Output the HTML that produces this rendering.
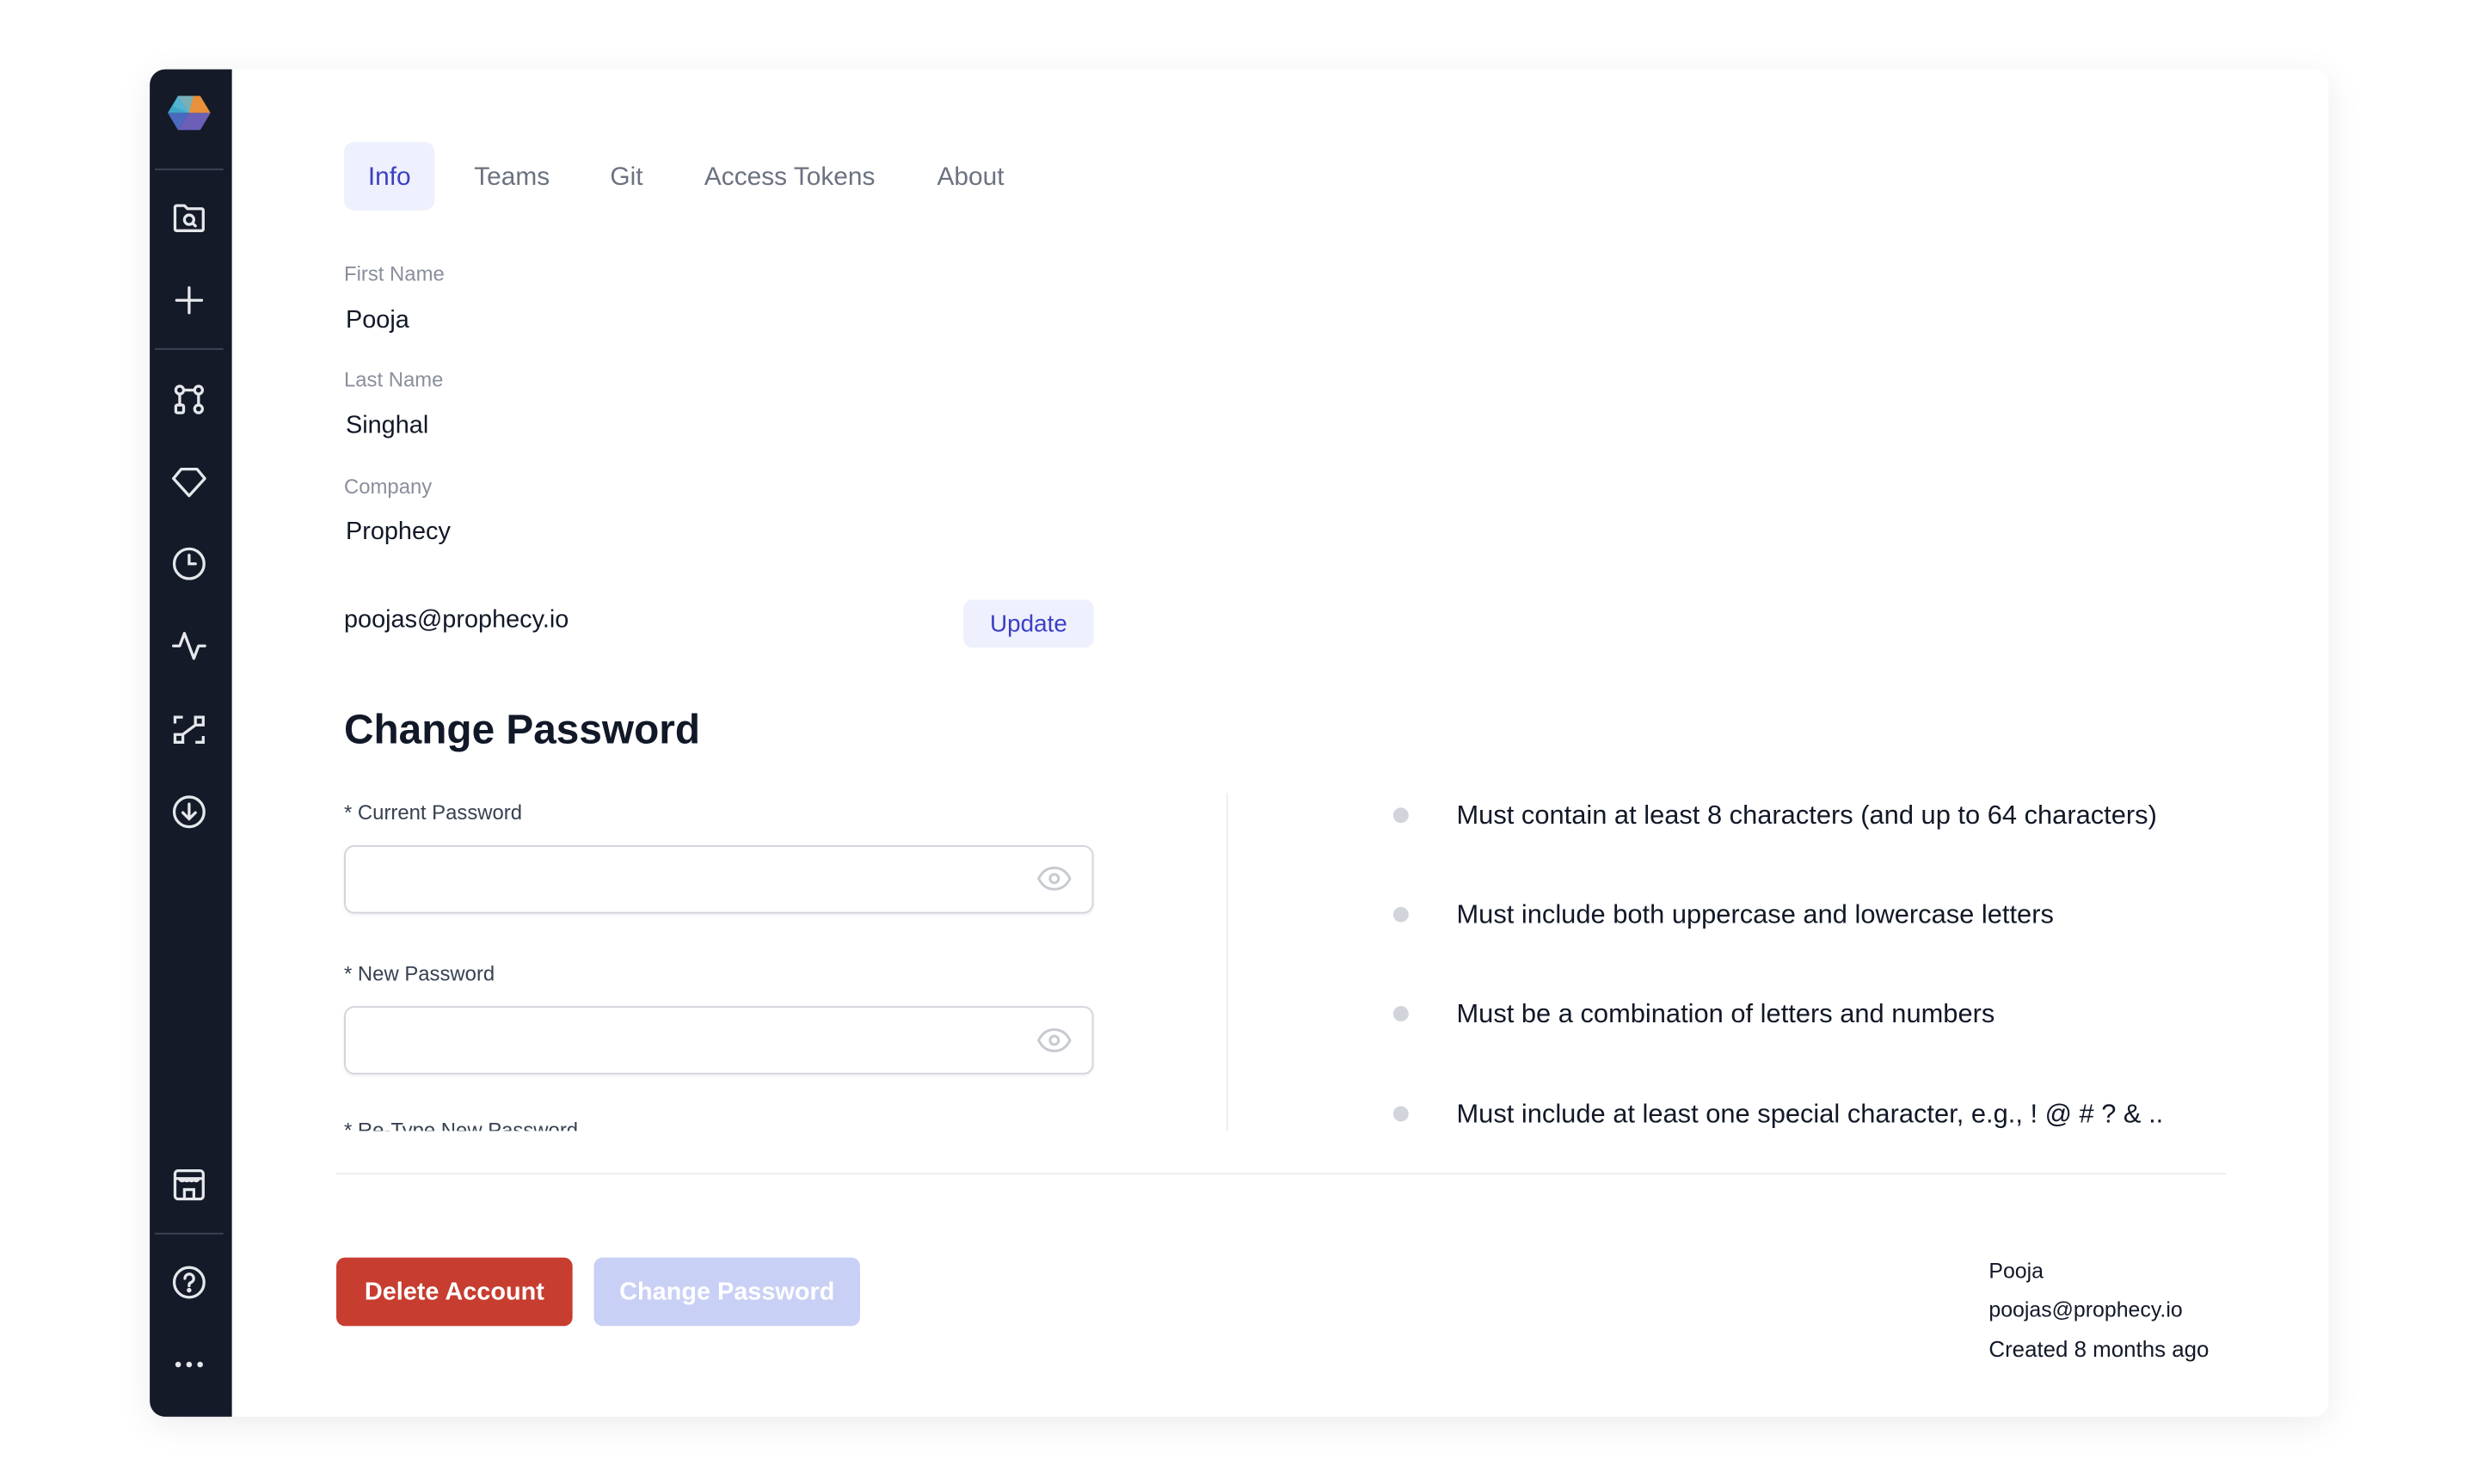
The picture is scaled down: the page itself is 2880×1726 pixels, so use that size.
<!DOCTYPE html>
<html><head><meta charset="utf-8"><style>
*{margin:0;padding:0;box-sizing:border-box}
html,body{width:2880px;height:1726px;background:#fff;overflow:hidden;font-family:"Liberation Sans",sans-serif}
#w{position:absolute;left:0;top:0;width:2880px;height:1726px;transform:scale(0.995);transform-origin:0 0}
.card{position:absolute;left:175px;top:81px;width:2546px;height:1575px;background:#fff;border-radius:18px;box-shadow:0 8px 40px rgba(0,0,0,0.08)}
.side{position:absolute;left:175px;top:81px;width:96px;height:1575px;background:#141a28;border-radius:18px 0 0 18px}
.sep{position:absolute;left:181px;width:80px;height:2px;background:#3a4150}
.ic{position:absolute;left:199px;width:44px;height:44px}
.t{position:absolute;white-space:nowrap}
.lab{font-size:24px;color:#8a8f9c}
.val{font-size:29px;color:#111827}
.tab{font-size:30px;color:#6b7280;top:190px}
.inp{position:absolute;left:402px;width:876px;height:80px;border:2px solid #d3d6dd;border-radius:12px;box-shadow:0 2px 3px rgba(0,0,0,0.05)}
.bul{position:absolute;left:1628px;width:18px;height:18px;border-radius:50%;background:#d1d5db}
.req{font-size:31px;color:#111827;left:1702px}
</style></head><body><div id="w">
<div class="card"></div>
<div class="side"></div>
<svg class="ic" style="top:110px;left:196px;width:50px" viewBox="0 0 50 44">
<polygon points="12,2 38,2 50,22 25,22" fill="#e9903a"/>
<polygon points="0,22 12,2 25,22" fill="#3fa7c8"/>
<polygon points="0,22 25,22 12,42" fill="#4a6ac0"/>
<polygon points="25,22 50,22 38,42 12,42" fill="#6b5fb8"/>
<polygon points="12,2 30,2 25,22 6,14" fill="#5bb8d6" opacity=".8"/>
</svg>
<div class="sep" style="top:197px"></div>
<svg class="ic" style="top:233px" viewBox="0 0 24 24" fill="none" stroke="#e5e7eb" stroke-width="1.8" stroke-linecap="round" stroke-linejoin="round"><path d="M3 7V5a1 1 0 0 1 1-1h5l2 2h9a1 1 0 0 1 1 1v12a1 1 0 0 1-1 1H4a1 1 0 0 1-1-1z"/><circle cx="12" cy="13" r="3"/><path d="M14.2 15.2 16 17"/></svg>
<svg class="ic" style="top:329px" viewBox="0 0 24 24" fill="none" stroke="#e5e7eb" stroke-width="1.8" stroke-linecap="round"><path d="M12 4v16M4 12h16"/></svg>
<div class="sep" style="top:407px"></div>
<svg class="ic" style="top:445px" viewBox="0 0 24 24" fill="none" stroke="#e5e7eb" stroke-width="1.8"><circle cx="6" cy="6" r="2.5"/><circle cx="18" cy="6" r="2.5"/><rect x="3.5" y="15.5" width="5" height="5" rx="1"/><circle cx="18" cy="18" r="2.5"/><path d="M8.5 6h7M6 8.5v7M18 8.5v7"/></svg>
<svg class="ic" style="top:541px" viewBox="0 0 24 24" fill="none" stroke="#e5e7eb" stroke-width="1.8" stroke-linejoin="round"><path d="M7 4h10l5 6-10 11L2 10z"/></svg>
<svg class="ic" style="top:637px" viewBox="0 0 24 24" fill="none" stroke="#e5e7eb" stroke-width="1.8" stroke-linecap="round"><circle cx="12" cy="12" r="9.5"/><path d="M12 6.5V12h4"/></svg>
<svg class="ic" style="top:733px" viewBox="0 0 24 24" fill="none" stroke="#e5e7eb" stroke-width="1.8" stroke-linecap="round" stroke-linejoin="round"><path d="M2 12h4l3-8 6 16 3-8h4"/></svg>
<svg class="ic" style="top:831px" viewBox="0 0 24 24" fill="none" stroke="#e5e7eb" stroke-width="1.8"><path d="M3 8V4h5M16 4h5v5h-5zM3 15h5v5H3zM21 16v4h-5M8 15l8-6"/></svg>
<svg class="ic" style="top:927px" viewBox="0 0 24 24" fill="none" stroke="#e5e7eb" stroke-width="1.8" stroke-linecap="round"><circle cx="12" cy="12" r="9.5"/><path d="M12 7v9M8 12.5l4 4 4-4"/></svg>
<svg class="ic" style="top:1363px" viewBox="0 0 24 24" fill="none" stroke="#e5e7eb" stroke-width="1.8"><rect x="3" y="3" width="18" height="18" rx="2"/><path d="M3 8h18M6 8c0 2 3 2 3 0c0 2 3 2 3 0c0 2 3 2 3 0c0 2 3 2 3 0M9 21v-6h6v6"/></svg>
<div class="sep" style="top:1441px"></div>
<svg class="ic" style="top:1477px" viewBox="0 0 24 24" fill="none" stroke="#e5e7eb" stroke-width="1.8" stroke-linecap="round"><circle cx="12" cy="12" r="9.5"/><path d="M9.3 9.5a2.8 2.8 0 1 1 3.8 2.6c-.7.3-1.1.9-1.1 1.6v.5"/><circle cx="12" cy="17" r=".6" fill="#e5e7eb"/></svg>
<svg class="ic" style="top:1573px" viewBox="0 0 24 24" fill="#e5e7eb"><circle cx="5" cy="12" r="1.8"/><circle cx="12" cy="12" r="1.8"/><circle cx="19" cy="12" r="1.8"/></svg>

<div style="position:absolute;left:402px;top:166px;width:106px;height:80px;background:#eef0fd;border-radius:12px"></div>
<div class="t tab" style="left:430px;color:#3b3fc4">Info</div>
<div class="t tab" style="left:554px">Teams</div>
<div class="t tab" style="left:713px">Git</div>
<div class="t tab" style="left:823px">Access Tokens</div>
<div class="t tab" style="left:1095px">About</div>

<div class="t lab" style="left:402px;top:307px">First Name</div>
<div class="t val" style="left:404px;top:358px">Pooja</div>
<div class="t lab" style="left:402px;top:431px">Last Name</div>
<div class="t val" style="left:404px;top:481px">Singhal</div>
<div class="t lab" style="left:402px;top:556px">Company</div>
<div class="t val" style="left:404px;top:605px">Prophecy</div>
<div class="t val" style="left:402px;top:708px">poojas@prophecy.io</div>
<div style="position:absolute;left:1126px;top:701px;width:152px;height:56px;background:#eef0fd;border-radius:10px;color:#3b3fc4;font-size:28px;text-align:center;line-height:56px">Update</div>

<div class="t" style="left:402px;top:826px;font-size:48px;font-weight:bold;color:#111827">Change Password</div>
<div class="t" style="left:402px;top:937px;font-size:24px;color:#374151">* Current Password</div>
<div class="inp" style="top:988px"></div>
<svg style="position:absolute;left:1212px;top:1012px" width="40" height="30" viewBox="0 0 24 18" fill="none" stroke="#c7cad1" stroke-width="1.8"><path d="M1 9C4 3 8 1.5 12 1.5S20 3 23 9c-3 6-7 7.5-11 7.5S4 15 1 9z"/><circle cx="12" cy="9" r="3"/></svg>
<div class="t" style="left:402px;top:1125px;font-size:24px;color:#374151">* New Password</div>
<div class="inp" style="top:1176px"></div>
<svg style="position:absolute;left:1212px;top:1201px" width="40" height="30" viewBox="0 0 24 18" fill="none" stroke="#c7cad1" stroke-width="1.8"><path d="M1 9C4 3 8 1.5 12 1.5S20 3 23 9c-3 6-7 7.5-11 7.5S4 15 1 9z"/><circle cx="12" cy="9" r="3"/></svg>
<div style="position:absolute;left:402px;top:1300px;height:22px;overflow:hidden"><div class="t" style="position:relative;top:8px;font-size:24px;color:#374151">* Re-Type New Password</div></div>

<div style="position:absolute;left:1433px;top:927px;width:2px;height:395px;background:#eceef1"></div>
<div class="bul" style="top:944px"></div><div class="t req" style="top:935px">Must contain at least 8 characters (and up to 64 characters)</div>
<div class="bul" style="top:1060px"></div><div class="t req" style="top:1051px">Must include both uppercase and lowercase letters</div>
<div class="bul" style="top:1176px"></div><div class="t req" style="top:1167px">Must be a combination of letters and numbers</div>
<div class="bul" style="top:1293px"></div><div class="t req" style="top:1284px">Must include at least one special character, e.g., ! @ # ? &amp; ..</div>

<div style="position:absolute;left:393px;top:1371px;width:2208px;height:2px;background:#eceef1"></div>
<div style="position:absolute;left:393px;top:1470px;width:276px;height:80px;background:#c73d30;border-radius:10px;color:#fff;font-size:29px;font-weight:bold;text-align:center;line-height:80px">Delete Account</div>
<div style="position:absolute;left:694px;top:1470px;width:311px;height:80px;background:#c9d0f5;border-radius:10px;color:#fff;font-size:29px;font-weight:bold;text-align:center;line-height:80px">Change Password</div>
<div class="t" style="left:2324px;top:1472px;font-size:25px;color:#111827">Pooja</div>
<div class="t" style="left:2324px;top:1517px;font-size:25px;color:#111827">poojas@prophecy.io</div>
<div class="t" style="left:2324px;top:1562px;font-size:26px;color:#111827">Created 8 months ago</div>
</div></body></html>
